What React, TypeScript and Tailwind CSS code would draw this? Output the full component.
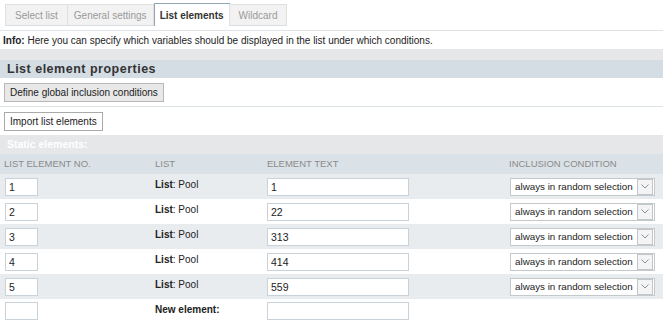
import React from "react";

type Row = { id: number; no: string; text: string };

const rows: Row[] = [
  { id: 1, no: "1", text: "1" },
  { id: 2, no: "2", text: "22" },
  { id: 3, no: "3", text: "313" },
  { id: 4, no: "4", text: "414" },
  { id: 5, no: "5", text: "559" },
];

const tabs = [
  { label: "Select list", pad: "px-[9px]" },
  { label: "General settings", pad: "px-[6px]" },
  { label: "List elements", pad: "px-[5px]" },
  { label: "Wildcard", pad: "px-[9px]" },
];

const ConditionSelect = () => (
  <div className="flex items-center h-[18px] w-[145px] border border-[#c4c9cc] bg-white">
    <span className="flex-1 pl-[4px] text-[9.8px] text-[#222] leading-none whitespace-nowrap">
      always in random selection
    </span>
    <span className="flex items-center justify-center w-[16px] h-[16px] mr-[1px] border border-[#c2c6c8] bg-[#f4f4f4]">
      <svg width="8" height="5" viewBox="0 0 8 5" fill="none">
        <path d="M0.5 0.5 L4 4 L7.5 0.5" stroke="#8a9298" strokeWidth="1" />
      </svg>
    </span>
  </div>
);

const App = () => {
  return (
    <div className="w-[663px] h-[323px] overflow-hidden bg-white font-['Liberation_Sans',Arial,sans-serif] text-[10px] text-[#222]">
      {/* TABS */}
      <div className="h-[31px] pt-[4px] pl-[5px] border-b border-[#dde3e7]">
        <div className="flex items-end h-[22px]">
          {tabs.map((t) =>
            t.label === "List elements" ? (
              <div
                key={t.label}
                className={`h-[23px] ${t.pad} flex items-center bg-white border border-[#8fa7b5] border-b-0 text-[#333] font-bold`}
              >
                {t.label}
              </div>
            ) : (
              <div
                key={t.label}
                className={`h-[22px] ${t.pad} flex items-center bg-[#f2f2f2] border border-[#e0e0e0] border-b-[#d8dde0] -ml-px first:ml-0 text-[#9a9a9a]`}
              >
                {t.label}
              </div>
            )
          )}
        </div>
      </div>

      {/* INFO */}
      <div className="h-[18px] flex items-center px-[3px]">
        <span className="font-bold">Info:</span>
        <span>&nbsp;Here you can specify which variables should be displayed in the list under which conditions.</span>
      </div>
      <div className="h-[11px] bg-[#e6e7e9]" />

      {/* SECTION HEADER */}
      <div className="h-[18px] flex items-center px-[7px] bg-[#d4dde3] text-[12.5px] font-bold tracking-[0.5px] text-[#333]">
        List element properties
      </div>

      <div className="h-[29px] flex items-center px-[4px] border-b border-[#dde4e8]">
        <button className="h-[19px] px-[5px] bg-[#e8e8e8] border border-[#b8b8b8] text-[10px] text-[#222]">
          Define global inclusion conditions
        </button>
      </div>
      <div className="h-[28px] flex items-center px-[4px]">
        <button className="h-[19px] px-[5px] bg-white border border-[#aaaaaa] text-[10px] text-[#222]">
          Import list elements
        </button>
      </div>

      {/* STATIC ELEMENTS */}
      <div className="h-[19px] flex items-center px-[7px] bg-[#e6e7e9] text-white font-bold text-[10.5px]">
        Static elements:
      </div>
      <div className="h-[20px] grid grid-cols-[155px_112px_242px_1fr] items-center bg-[#dbe2e7] text-[9.5px] text-[#8a8a8a] uppercase">
        <span className="pl-[4px]">List element no.</span>
        <span>List</span>
        <span>Element text</span>
        <span>Inclusion condition</span>
      </div>

      {rows.map((r, i) => (
        <div
          key={r.id}
          className={`h-[25px] grid grid-cols-[155px_112px_242px_1fr] items-center ${
            i % 2 === 0 ? "bg-[#e9ecef]" : "bg-white"
          }`}
        >
          <div className="pl-[5px]">
            <input
              readOnly
              value={r.no}
              className="h-[18px] w-[33px] px-[3px] bg-white border border-[#c9d2d8] text-[10.5px] text-[#222] outline-none"
            />
          </div>
          <div className="-mt-[4px]">
            <span className="font-bold">List</span>: Pool
          </div>
          <div>
            <input
              readOnly
              value={r.text}
              className="h-[18px] w-[142px] px-[3px] bg-white border border-[#c9d2d8] text-[10.5px] text-[#222] outline-none"
            />
          </div>
          <div className="pl-[1px]">
            <ConditionSelect />
          </div>
        </div>
      ))}

      <div className="h-[24px] grid grid-cols-[155px_112px_242px_1fr] items-center bg-white">
        <div className="pl-[5px]">
          <input
            readOnly
            value=""
            className="h-[18px] w-[33px] px-[3px] bg-white border border-[#c9d2d8] outline-none"
          />
        </div>
        <div className="-mt-[4px] font-bold">New element:</div>
        <div>
          <input
            readOnly
            value=""
            className="h-[18px] w-[142px] px-[3px] bg-white border border-[#c9d2d8] outline-none"
          />
        </div>
        <div />
      </div>
    </div>
  );
};

export default App;
